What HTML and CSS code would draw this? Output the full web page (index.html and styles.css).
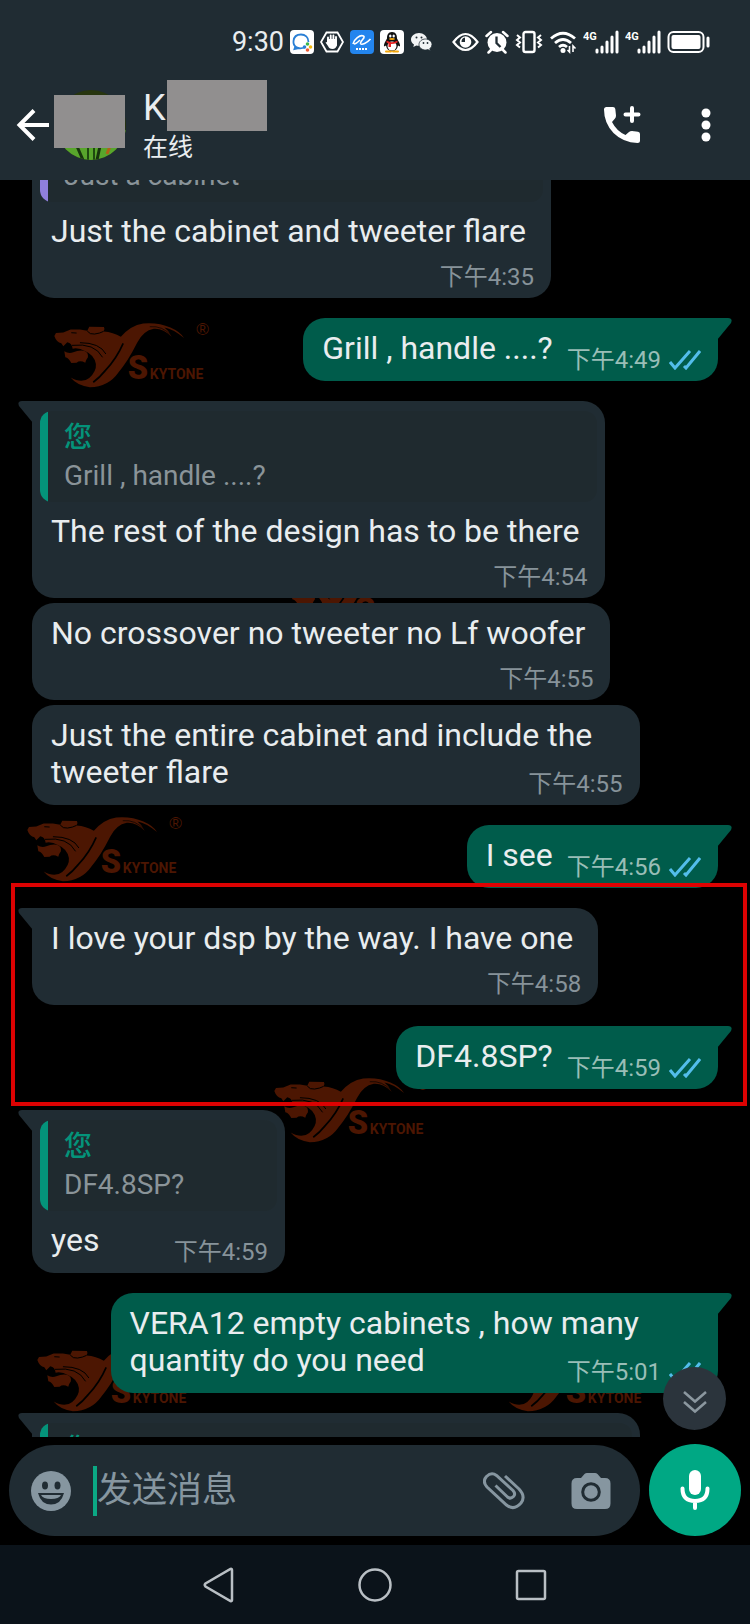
FILE: index.html
```html
<!DOCTYPE html>
<html lang="zh-CN">
<head>
<meta charset="utf-8">
<meta name="viewport" content="width=device-width, initial-scale=1">
<title>聊天</title>
<link rel="stylesheet" href="styles.css">
</head>
<body>
<svg class="sprite" aria-hidden="true">
  <symbol id="logo" viewBox="156 60 484 204">
    <g fill="#4c1602">
      <path d="M163 108 L168 99 L190 97 L212 88 L240 88 L262 92 L268 80 L312 81 Q316 86 311 94 Q340 96 363 110 Q392 76 430 70 Q475 66 512 82 Q542 95 553 114 Q520 86 494 82 Q508 92 516 110 Q490 84 462 86 Q430 92 412 128 Q384 184 355 218 Q326 260 270 262 Q232 258 212 233 Q246 252 268 234 Q290 214 288 192 Q282 164 256 154 Q236 142 218 146 Q216 130 202 127 L190 139 L184 130 Q170 128 163 108Z"/>
      <path d="M193 154 Q206 162 220 157 Q236 149 252 152 Q266 156 264 172 Q258 180 256 188 Q240 180 230 188 L214 189 Q206 174 196 172Z"/>
      <text x="384" y="237" class="logo-initial">S</text>
      <text x="450" y="237" class="logo-word">KYTONE</text>
      <text x="590" y="106" class="logo-mark">®</text>
    </g>
    <g fill="none" stroke="#000">
      <path d="M216 136 Q285 128 308 172 M240 128 Q300 128 318 162" stroke-width="3"/>
      <path d="M370 130 Q350 176 316 212 Q300 232 280 247" stroke-width="5"/>
      <path d="M262 93 Q270 104 284 102 Q300 100 311 94 M214 98 L230 99" stroke-width="3"/>
      <path d="M516 108 Q488 76 450 80" stroke-width="2"/>
    </g>
  </symbol>
  <symbol id="tail-in" viewBox="0 0 15 22"><path d="M15 0H4Q-1 0 1 5L15 22Z" fill="#202c33"/></symbol>
  <symbol id="tail-out" viewBox="0 0 15 22"><path d="M0 0H11Q16 0 14 5L0 22Z" fill="#005c4b"/></symbol>
  <symbol id="ticks" viewBox="0 0 32 20"><path d="M1 12L6 18L21 1M15 16L17 18L31 1" fill="none" stroke="#53bdeb" stroke-width="3"/></symbol>
  <symbol id="signal" viewBox="0 0 36 24">
    <text x="0" y="10" class="signal-label">4G</text>
    <path d="M14 20v2M19 17v5M24 12v10M29 7v15M34 2v20" stroke="#fff" stroke-width="3" stroke-linecap="round"/>
  </symbol>
</svg>

<div class="screen">
  <header class="top">
    <div class="statusbar">
      <span class="clock">9:30</span>
      <svg width="24" height="24" viewBox="0 0 24 24"><rect width="24" height="24" rx="4" fill="#fff"/><path d="M15 17.500C7 20 3 16 3.500 11C4 6 8 4.500 11 4.500C15 4.500 18.500 7 18.500 12M5.500 16L4.500 19L9 18" fill="none" stroke="#2a7fd5" stroke-width="1.800"/><circle cx="17.500" cy="14" r="1.800" fill="#3bb54a"/><circle cx="20.500" cy="17" r="1.800" fill="#f2b90f"/><circle cx="17.500" cy="20" r="1.800" fill="#ee5b35"/><circle cx="14.500" cy="17" r="1.800" fill="#2a7fd5"/></svg>
      <svg width="24" height="24" viewBox="0 0 24 24"><path d="M6.500 2.500h11L23 12l-5.500 9.500h-11L1 12z" fill="none" stroke="#fff" stroke-width="1.800"/><path d="M8 11V7.500M10.700 10V5.500M13.400 10V5.500M16 11V7M8 10h8v5" stroke="#fff" stroke-width="1.900" stroke-linecap="round" fill="none"/><path d="M7 9.500h10V15q-1 4-4.500 4T8 16L5.500 12.500l1.500-.5z" fill="#fff"/></svg>
      <svg width="24" height="24" viewBox="0 0 24 24"><rect width="24" height="24" rx="4" fill="#2385ee"/><path d="M3 14C4 9 10 4.500 13.500 6C16 7.500 10 11 10.500 13.500C11.500 15.500 17 13 20.500 9M4 14Q6 14 10 10" fill="none" stroke="#fff" stroke-width="1.600"/><path d="M6 19h12" stroke="#fff" stroke-width="2" stroke-dasharray="2 1"/></svg>
      <svg width="24" height="24" viewBox="0 0 24 24"><rect width="24" height="24" rx="4" fill="#fff"/><path d="M12 2C8 2 7 5 7 8.500C5 12 3.500 14.500 4 16.500L6 15.500Q7 21 12 21T18 15.500L20 16.500C20.500 14.500 19 12 17 8.500C17 5 16 2 12 2" fill="#111"/><ellipse cx="12" cy="16" rx="4.500" ry="4.500" fill="#fff"/><ellipse cx="10.300" cy="6" rx="1.200" ry="1.600" fill="#fff"/><ellipse cx="13.700" cy="6" rx="1.200" ry="1.600" fill="#fff"/><ellipse cx="12" cy="9" rx="3" ry="1" fill="#f5a80c"/><path d="M6.500 10.500Q12 14 17.500 10.500V12.500Q14 14 11 14V17H8.500V13.500L6.500 12.500Z" fill="#e32222"/><path d="M6 21.500h5M13 21.500h5" stroke="#f5a80c" stroke-width="2" stroke-linecap="round"/></svg>
      <svg width="24" height="24" viewBox="0 0 24 24"><path d="M9 3C4.500 3 1 6 1 9.500C1 11.500 2 13.200 4 14.500L3.300 17L6.300 15.500Q7.500 15.800 9 15.800C13.500 15.800 17 13 17 9.500S13.500 3 9 3" fill="#f2f4f5"/><path d="M15.500 9C11.800 9 9 11.500 9 14.500S11.800 20 15.500 20Q16.800 20 18 19.600L20.300 21L19.800 18.700Q22 17 22 14.500C22 11.500 19 9 15.500 9" fill="#f2f4f5" stroke="#202c33" stroke-width=".8"/><g fill="#202c33"><circle cx="6.500" cy="7.500" r="1"/><circle cx="11.500" cy="7.500" r="1"/><circle cx="13.500" cy="13" r=".9"/><circle cx="17.500" cy="13" r=".9"/></g></svg>
      <svg class="eye" width="27" height="24" viewBox="0 0 27 24"><path d="M1.500 12Q7.500 4 13.500 4T25.500 12Q19.500 20 13.500 20T1.500 12Z" fill="none" stroke="#fff" stroke-width="2.200"/><circle cx="13.500" cy="12" r="5.800" fill="#fff"/><path d="M13 12V7.500A4.500 4.500 0 0 0 9.500 12Z" fill="#202c33"/></svg>
      <svg width="24" height="24" viewBox="0 0 24 24"><circle cx="12" cy="12.500" r="9.500" fill="#fff"/><path d="M1.500 6L6 2M18 2L22.500 6M6 20L3.500 22.500M18 20L20.500 22.500" stroke="#fff" stroke-width="2.500" stroke-linecap="round"/><path d="M11.500 6.500V13L15.500 17" fill="none" stroke="#202c33" stroke-width="2.300"/></svg>
      <svg width="28" height="24" viewBox="0 0 28 24"><rect x="8.500" y="2" width="11" height="20" rx="2" fill="none" stroke="#fff" stroke-width="2.400"/><path d="M2 5l3 2.500-3 2.500 3 2.500-3 2.500 3 2.500M26 5l-3 2.500 3 2.500-3 2.500 3 2.500-3 2.500" fill="none" stroke="#fff" stroke-width="2"/></svg>
      <svg width="28" height="24" viewBox="0 0 28 24"><path d="M2 8.500Q14-2 26 8.500M6 13Q14 6 22 13M10 17Q14 13.500 18 17" fill="none" stroke="#fff" stroke-width="2.800"/><circle cx="14" cy="20.500" r="2.500" fill="#fff"/><path d="M20.500 16v6l-2-2M24 22v-6l2.500 2.500" fill="none" stroke="#fff" stroke-width="1.600"/></svg>
      <svg width="36" height="24" role="img" aria-label="4G"><use href="#signal"/></svg>
      <svg width="36" height="24" role="img" aria-label="4G"><use href="#signal"/></svg>
      <svg width="43" height="24" viewBox="0 0 43 24"><rect x="1.500" y="2" width="35" height="20" rx="5" fill="none" stroke="#fff" stroke-width="2"/><rect x="4.500" y="5" width="29" height="14" rx="2" fill="#fff"/><path d="M41 8v8" stroke="#fff" stroke-width="3" stroke-linecap="round"/></svg>
    </div>
    <div class="appbar">
      <button class="icon-button" aria-label="返回"><svg width="34" height="34" viewBox="0 0 34 34"><path d="M33 17H4M18 2.500L3.500 17L18 31.500" fill="none" stroke="#fff" stroke-width="4"/></svg></button>
      <div class="avatar">
        <svg width="70" height="70" viewBox="0 0 70 70"><defs><clipPath id="round"><circle cx="35" cy="35" r="35"/></clipPath></defs><g clip-path="url(#round)"><rect width="70" height="70" fill="#27350f"/><rect y="40" width="70" height="30" fill="#58a52c"/><path d="M32 56v14M38 56v14" stroke="#1f4a10" stroke-width="2"/><path d="M20 54l7 16M44 56l-3 14" stroke="#17350d" stroke-width="3"/><path d="M54 56l-3 8" stroke="#b06018" stroke-width="3"/></g></svg>
        <span class="mask mask--avatar"></span>
      </div>
      <div class="contact">
        <h1 class="name">K<span class="mask mask--name"></span></h1>
        <p class="presence">在线</p>
      </div>
      <button class="icon-button" aria-label="通话"><svg width="38" height="38" viewBox="0 0 38 38"><path d="M3.500 1H10Q12 1 12.300 3L13 9.500Q13 11.500 12 12.500L9 16Q13.500 25 22.500 29L26 26Q27 25 29 25L35 25.800Q37 26 37 28V34.500Q37 37 34.500 37Q20 36.500 10.500 27Q1 17 1 3.500Q1 1 3.500 1Z" fill="#fff"/><path d="M29 2v13M22.500 8.500h13" stroke="#fff" stroke-width="4" stroke-linecap="round"/></svg></button>
      <button class="icon-button icon-button--menu" aria-label="更多"><svg width="10" height="34" viewBox="0 0 10 34"><g fill="#fff"><circle cx="5" cy="5" r="4.500"/><circle cx="5" cy="17" r="4.500"/><circle cx="5" cy="29" r="4.500"/></g></svg></button>
    </div>
  </header>

  <main class="chat">
    <div class="wallpaper" aria-hidden="true">
      <svg class="stamp stamp--a"><use href="#logo"/></svg>
      <svg class="stamp stamp--b"><use href="#logo"/></svg>
      <svg class="stamp stamp--c"><use href="#logo"/></svg>
      <svg class="stamp stamp--d"><use href="#logo"/></svg>
      <svg class="stamp stamp--e"><use href="#logo"/></svg>
      <svg class="stamp stamp--f"><use href="#logo"/></svg>
    </div>

    <div class="messages">
      <article class="bubble bubble--in">
        <blockquote class="quote quote--other"><p class="quote-name">K</p><p class="quote-text">Just a cabinet</p></blockquote>
        <div class="body body--stacked"><p class="text">Just the cabinet and tweeter flare</p><div class="meta"><time>下午4:35</time></div></div>
      </article>

      <article class="bubble bubble--out bubble--tail">
        <svg class="tail"><use href="#tail-out"/></svg>
        <div class="body body--inline"><p class="text">Grill , handle ....?</p><div class="meta"><time>下午4:49</time><svg class="ticks"><use href="#ticks"/></svg></div></div>
      </article>

      <div class="run">
        <article class="bubble bubble--in bubble--tail">
          <svg class="tail"><use href="#tail-in"/></svg>
          <blockquote class="quote"><p class="quote-name">您</p><p class="quote-text">Grill , handle ....?</p></blockquote>
          <div class="body body--stacked"><p class="text">The rest of the design has to be there</p><div class="meta"><time>下午4:54</time></div></div>
        </article>
        <article class="bubble bubble--in">
          <div class="body body--stacked"><p class="text">No crossover no tweeter no Lf woofer</p><div class="meta"><time>下午4:55</time></div></div>
        </article>
        <article class="bubble bubble--in bubble--wide">
          <div class="body body--layered"><p class="text">Just the entire cabinet and include the tweeter flare</p><div class="meta"><time>下午4:55</time></div></div>
        </article>
      </div>

      <article class="bubble bubble--out bubble--tail">
        <svg class="tail"><use href="#tail-out"/></svg>
        <div class="body body--inline"><p class="text">I see</p><div class="meta"><time>下午4:56</time><svg class="ticks"><use href="#ticks"/></svg></div></div>
      </article>

      <section class="highlight">
        <article class="bubble bubble--in bubble--tail">
          <svg class="tail"><use href="#tail-in"/></svg>
          <div class="body body--stacked"><p class="text">I love your dsp by the way. I have one</p><div class="meta"><time>下午4:58</time></div></div>
        </article>
        <article class="bubble bubble--out bubble--tail">
          <svg class="tail"><use href="#tail-out"/></svg>
          <div class="body body--inline"><p class="text">DF4.8SP?</p><div class="meta"><time>下午4:59</time><svg class="ticks"><use href="#ticks"/></svg></div></div>
        </article>
      </section>

      <article class="bubble bubble--in bubble--tail bubble--reply">
        <svg class="tail"><use href="#tail-in"/></svg>
        <blockquote class="quote"><p class="quote-name">您</p><p class="quote-text">DF4.8SP?</p></blockquote>
        <div class="body body--inline"><p class="text">yes</p><div class="meta"><time>下午4:59</time></div></div>
      </article>

      <article class="bubble bubble--out bubble--tail bubble--wide">
        <svg class="tail"><use href="#tail-out"/></svg>
        <div class="body body--layered"><p class="text">VERA12 empty cabinets , how many quantity do you need</p><div class="meta"><time>下午5:01</time><svg class="ticks"><use href="#ticks"/></svg></div></div>
      </article>

      <article class="bubble bubble--in bubble--tail bubble--wide">
        <svg class="tail"><use href="#tail-in"/></svg>
        <blockquote class="quote"><p class="quote-name">您</p></blockquote>
      </article>
    </div>

    <button class="jump" aria-label="跳到最新消息"><svg width="26" height="24" viewBox="0 0 26 24"><path d="M2 2L13 11.500L24 2M2 12L13 21.500L24 12" fill="none" stroke="#8b979f" stroke-width="2.500"/></svg></button>
  </main>

  <form class="composer">
    <div class="field">
      <button type="button" class="icon-button" aria-label="表情"><svg width="40" height="40" viewBox="0 0 40 40"><circle cx="20" cy="20" r="20" fill="#8696a0"/><ellipse cx="14" cy="14.500" rx="3" ry="4" fill="#202c33"/><ellipse cx="26.500" cy="14.500" rx="3" ry="4" fill="#202c33"/><path d="M7 22H33Q30 33.500 20 33.500T7 22Z" fill="#202c33"/><path d="M10 24H30Q28 28 20 28T10 24Z" fill="#8696a0"/></svg></button>
      <input class="input" type="text" placeholder="发送消息" aria-label="发送消息">
      <button type="button" class="icon-button" aria-label="附件"><svg width="42" height="38" viewBox="0 0 42 38"><path d="M22 4L36 17Q43 24.500 38 31Q31 39 23.500 33L4 15Q-1 9.500 3.500 4.500Q8.500-.5 13.500 3.500L30 18.500Q33 22 30.500 24.500Q27.500 27.500 24.500 25L12.500 13.500" fill="none" stroke="#8696a0" stroke-width="3"/></svg></button>
      <button type="button" class="icon-button icon-button--camera" aria-label="相机"><svg width="40" height="38" viewBox="0 0 40 38"><path d="M6 6H10L13.500 2Q14.500 1 16 1H24Q25.500 1 26.500 2L30 6H34Q39.500 6 39.500 11.500V31.500Q39.500 37 34 37H6Q.5 37 .5 31.500V11.500Q.5 6 6 6Z" fill="#8696a0"/><circle cx="20" cy="20" r="8.300" fill="#8696a0" stroke="#202c33" stroke-width="3"/></svg></button>
    </div>
    <button type="button" class="mic" aria-label="语音"><svg width="30" height="42" viewBox="0 0 30 42"><rect x="9" y="1" width="12" height="25" rx="6" fill="#fff"/><path d="M2.500 19.500Q2.500 32 15 32T27.500 19.500M15 32V39" fill="none" stroke="#fff" stroke-width="4" stroke-linecap="round"/></svg></button>
  </form>

  <nav class="navbar" aria-label="系统导航">
    <button class="nav-button" aria-label="返回"><svg width="34" height="36" viewBox="0 0 34 36"><path d="M30 3V33Q30 34.500 28.500 34L3.500 19.500Q2 18 3.500 16.500L28.500 2Q30 1.500 30 3Z" fill="none" stroke="#b9bfc4" stroke-width="2.500"/></svg></button>
    <button class="nav-button" aria-label="主页"><svg width="36" height="36" viewBox="0 0 36 36"><circle cx="18" cy="18" r="15.500" fill="none" stroke="#b9bfc4" stroke-width="2.500"/></svg></button>
    <button class="nav-button" aria-label="最近任务"><svg width="32" height="32" viewBox="0 0 32 32"><rect x="2" y="2" width="28" height="28" rx="1.500" fill="none" stroke="#b9bfc4" stroke-width="2.500"/></svg></button>
  </nav>
</div>
</body>
</html>
```

FILE: styles.css
```css
* { box-sizing: border-box; margin: 0; }

body {
  background: #000;
  color: #e9edef;
  font-family: Roboto, "Noto Sans CJK SC", sans-serif;
}

button {
  padding: 0;
  border: 0;
  background: none;
}

svg { display: block; flex: none; }

.sprite { position: absolute; width: 0; height: 0; }
.logo-initial { font: 900 98px Roboto, "Liberation Sans", sans-serif; }
.logo-word { font: bold 42px Roboto, "Liberation Sans", sans-serif; }
.logo-mark { font: 52px "Liberation Sans", sans-serif; }
.signal-label { font: bold 11px Roboto, sans-serif; fill: #fff; }

.screen {
  display: flex;
  flex-direction: column;
  height: 100vh;
}

/* Header */
.top { background: #202c33; }

.statusbar {
  display: flex;
  align-items: center;
  justify-content: flex-end;
  gap: 6px;
  height: 70px;
  padding: 14px 40px 0 0;
}
.statusbar > .eye { margin-left: 12px; }
.clock { font-size: 27px; line-height: 44px; }

.appbar {
  display: flex;
  align-items: center;
  height: 110px;
  padding: 0 39px 0 16px;
}
.icon-button { flex: none; }
.icon-button--menu { margin-left: 60px; }

.avatar { position: relative; margin-left: 6px; }
.mask { position: absolute; background: #918f8f; }
.mask--avatar { left: -2px; top: 5px; width: 71px; height: 53px; }
.mask--name { left: 24px; top: -7px; width: 100px; height: 51px; }

.contact { flex: 1; margin-left: 17px; }
.name {
  position: relative;
  font-size: 36px;
  font-weight: 400;
  line-height: 42px;
}
.presence { margin-top: 4px; font-size: 25px; line-height: 30px; }

/* Conversation */
.chat {
  position: relative;
  flex: 1;
  min-height: 0;
  overflow: hidden;
}

.wallpaper { position: absolute; inset: 0; }
.stamp { position: absolute; width: 161px; height: 68px; }
.stamp--a { left: 52px; top: 140px; }
.stamp--b { left: 279px; top: 382px; }
.stamp--c { left: 25px; top: 634px; }
.stamp--d { left: 272px; top: 895px; }
.stamp--e { left: 35px; top: 1164px; }
.stamp--f { left: 490px; top: 1164px; }

.messages {
  position: relative;
  display: flex;
  flex-direction: column;
  gap: 20px;
  margin-top: -79px;
}
.run { display: flex; flex-direction: column; gap: 5px; }

.bubble {
  position: relative;
  width: fit-content;
  border-radius: 22px;
}
.bubble--in { margin-left: 32px; background: #202c33; color: #e9edef; }
.bubble--out { margin-left: auto; margin-right: 32px; background: #005c4b; }
.bubble--in.bubble--tail { border-top-left-radius: 0; }
.bubble--out.bubble--tail { border-top-right-radius: 0; }
.bubble--wide { width: 81%; }
.bubble--reply { min-width: 253px; }

.tail { position: absolute; top: 0; width: 15px; height: 22px; }
.bubble--in .tail { left: -14px; }
.bubble--out .tail { right: -14px; }

.quote {
  padding: 8px 24px 6px;
  border-radius: 12px;
  background: linear-gradient(to right, #04937a 8px, #1f2a2f 8px);
}
.bubble:has(.quote) { padding: 10px 8px 0; }
.quote--other { background: linear-gradient(to right, #8f7fdc 8px, #1f2a2f 8px); }
.quote-name { color: #04937a; font-size: 28px; font-weight: 500; line-height: 37px; }
.quote-text { color: #8a9499; font-size: 28px; line-height: 40px; }

.body { padding: 12px 17px 7px 19px; }
.quote + .body { padding: 11px 9px 7px 11px; }
.text { padding-bottom: 7px; font-size: 32px; line-height: 37px; }
.meta {
  display: flex;
  align-items: center;
  gap: 8px;
  color: #87939a;
  font-size: 24px;
  line-height: 28px;
}
.bubble--out .meta { color: #99beb7; }
.ticks { width: 32px; height: 20px; }

.body--stacked { display: flex; flex-direction: column; }
.body--stacked .text { padding-right: 8px; }
.body--stacked .meta { align-self: flex-end; margin-top: 6px; }

.body--inline {
  display: flex;
  align-items: flex-end;
  justify-content: space-between;
  gap: 14px;
}

.body--layered { display: grid; }
.body--layered > * { grid-area: 1 / 1; }
.body--layered .meta { place-self: end; }

.highlight {
  position: relative;
  display: flex;
  flex-direction: column;
  gap: 21px;
  padding-bottom: 1px;
}
.highlight::after {
  content: "";
  position: absolute;
  z-index: 1;
  inset: -25px 3px -16px 11px;
  border: 4px solid #dc0202;
  pointer-events: none;
}

.jump {
  position: absolute;
  right: 24px;
  bottom: 7px;
  display: grid;
  place-items: center;
  width: 63px;
  height: 63px;
  padding-top: 6px;
  border-radius: 50%;
  background: #2b343c;
}

/* Composer */
.composer {
  display: flex;
  align-items: flex-end;
  gap: 9px;
  padding: 7px 9px 9px;
  background: #000;
}
.field {
  display: flex;
  flex: 1;
  align-items: center;
  min-width: 0;
  height: 91px;
  padding: 0 29px 0 22px;
  border-radius: 46px;
  background: #202c33;
}
.input {
  flex: 1;
  min-width: 0;
  height: 50px;
  margin-left: 22px;
  padding: 0;
  border: 0;
  border-left: 4px solid #0ba884;
  outline: 0;
  background: none;
  color: #e9edef;
  font: 35px Roboto, "Noto Sans CJK SC", sans-serif;
}
.input::placeholder { color: #8696a0; opacity: 1; }
.icon-button--camera { margin-left: 46px; }
.mic {
  display: grid;
  place-items: center;
  flex: none;
  width: 92px;
  height: 92px;
  border-radius: 50%;
  background: #00a884;
}

/* System navigation */
.navbar {
  display: flex;
  justify-content: center;
  height: 79px;
  background: #0b131a;
}
.nav-button { display: grid; place-items: center; width: 156px; }
```
